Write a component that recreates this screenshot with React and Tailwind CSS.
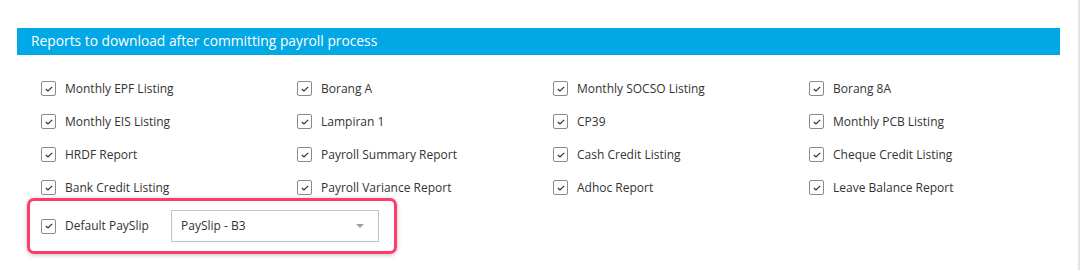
import { useState } from "react";

const reports = [
  ["Monthly EPF Listing", "Borang A", "Monthly SOCSO Listing", "Borang 8A"],
  ["Monthly EIS Listing", "Lampiran 1", "CP39", "Monthly PCB Listing"],
  ["HRDF Report", "Payroll Summary Report", "Cash Credit Listing", "Cheque Credit Listing"],
  ["Bank Credit Listing", "Payroll Variance Report", "Adhoc Report", "Leave Balance Report"],
];

function Check({ checked, onClick }) {
  return (
    <button
      type="button"
      onClick={onClick}
      className="w-[15px] h-[15px] border border-[#8a8a8a] rounded-[2px] bg-white flex items-center justify-center shrink-0"
    >
      {checked && (
        <svg width="8" height="6" viewBox="0 0 8 6" fill="none">
          <path d="M0.8 3 L3 5 L7.2 0.8" stroke="#333" strokeWidth="1.2" />
        </svg>
      )}
    </button>
  );
}

export default function App() {
  const [checked, setChecked] = useState(() => reports.flat().concat("payslip"));

  const toggle = (name) =>
    setChecked((c) => (c.includes(name) ? c.filter((x) => x !== name) : [...c, name]));

  return (
    <div
      className="w-[1080px] h-[276px] bg-white flex text-[12px] text-[#333]"
      style={{ fontFamily: '"Open Sans", "Noto Sans", sans-serif' }}
    >
      <div className="w-[1078px] pt-[28px] pl-[17px] pr-[18px]">
        {/* HEADER */}
        <div className="h-[27px] bg-[#00a8e6] text-white text-[13.8px] flex items-center pl-[14px]">
          Reports to download after committing payroll process
        </div>

        {/* GRID */}
        <div className="pl-[24px] pt-[17px]">
          {reports.map((row, i) => (
            <div key={i} className="grid grid-cols-[256px_256px_256px_256px] h-[33px] items-center">
              {row.map((name) => (
                <label key={name} className="flex items-center gap-[9px] cursor-pointer">
                  <Check checked={checked.includes(name)} onClick={() => toggle(name)} />
                  <span onClick={() => toggle(name)}>{name}</span>
                </label>
              ))}
            </div>
          ))}
        </div>

        {/* DEFAULT PAYSLIP */}
        <div className="ml-[10px] mt-[-6px] w-[370px] h-[56px] border-[3px] border-[#ff3b6b] rounded-[7px] shadow-[0_1px_4px_rgba(0,0,0,0.25)] flex items-center pl-[11px]">
          <Check checked={checked.includes("payslip")} onClick={() => toggle("payslip")} />
          <span className="ml-[9px] w-[106px]">Default PaySlip</span>
          <div className="w-[208px] h-[32px] border border-[#c4c4c4] flex items-center justify-between pl-[9px] pr-[14px]">
            <span>PaySlip - B3</span>
            <svg width="8" height="4" viewBox="0 0 8 4">
              <path d="M0 0 L8 0 L4 4 Z" fill="#a0a0a0" />
            </svg>
          </div>
        </div>
      </div>
      <div className="w-[2px] h-[270px] bg-[#dde3ea]" />
    </div>
  );
}
